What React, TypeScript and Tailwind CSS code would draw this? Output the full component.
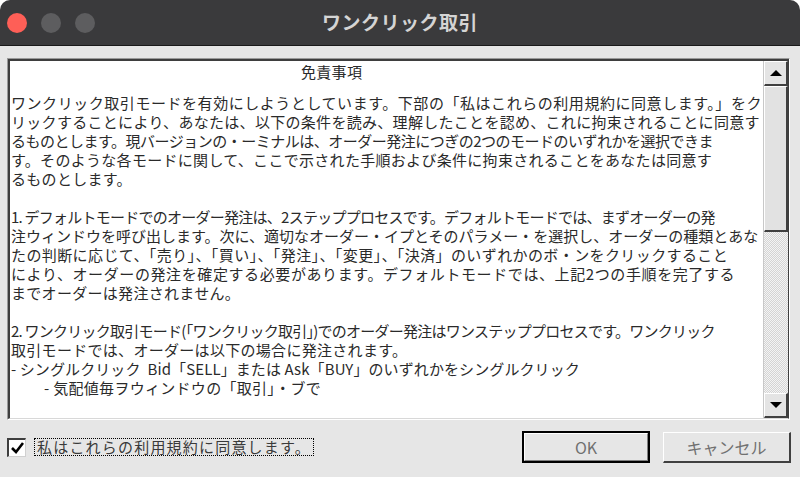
const jp = "font-['Noto_Sans_CJK_JP','Noto_Sans',sans-serif]";

type Line = { t: string; c: string };

// tracking per line so the wraps end where the reference ends them
const intro: Line[] = [
  { t: "ワンクリック取引モードを有効にしようとしています。下部の「私はこれらの利用規約に同意します。」をク", c: "tracking-[0.55px]" },
  { t: "リックすることにより、あなたは、以下の条件を読み、理解したことを認め、これに拘束されることに同意す", c: "tracking-[0.3px]" },
  { t: "るものとします。現バージョンの・ーミナルは、オーダー発注につぎの2つのモードのいずれかを選択できま", c: "tracking-[-0.5px]" },
  { t: "す。そのような各モードに関して、ここで示された手順および条件に拘束されることをあなたは同意す", c: "tracking-[0.3px]" },
  { t: "るものとします。", c: "tracking-[0.3px]" },
];

const item1: Line[] = [
  { t: "1. デフォルトモードでのオーダー発注は、2ステッププロセスです。デフォルトモードでは、まずオーダーの発", c: "tracking-[-0.75px]" },
  { t: "注ウィンドウを呼び出します。次に、適切なオーダー・イプとそのパラメー・を選択し、オーダーの種類とあな", c: "tracking-[0px]" },
  { t: "たの判断に応じて、「売り」、「買い」、「発注」、「変更」、「決済」のいずれかのボ・ンをクリックすること", c: "tracking-[0.4px]" },
  { t: "により、オーダーの発注を確定する必要があります。デフォルトモードでは、上記2つの手順を完了する", c: "tracking-[0.6px]" },
  { t: "までオーダーは発注されません。", c: "tracking-[0.3px]" },
];

const item2: Line[] = [
  { t: "2. ワンクリック取引モード(「ワンクリック取引」)でのオーダー発注はワンステッププロセスです。ワンクリック", c: "tracking-[-0.75px]" },
  { t: "取引モードでは、オーダーは以下の場合に発注されます。", c: "tracking-[0.3px]" },
  { t: "- シングルクリック  Bid「SELL」または Ask「BUY」のいずれかをシングルクリック", c: "tracking-[0.1px]" },
];

function Lines({ lines }: { lines: Line[] }) {
  return (
    <>
      {lines.map((l, i) => (
        <div key={i} className={`whitespace-pre ${l.c}`}>
          {l.t}
        </div>
      ))}
    </>
  );
}

function Scrollbar() {
  return (
    <div className="w-[25px] flex flex-col border-l border-[#c8c8c8]">
      {/* up */}
      <div className="h-[25px] flex items-center justify-center bg-[#e4e4e4] border-t border-l border-white border-b-2 border-r-2 border-b-[#404040] border-r-[#404040]">
        <div className="w-0 h-0 border-l-[6px] border-r-[6px] border-b-[6px] border-l-transparent border-r-transparent border-b-black" />
      </div>
      {/* thumb */}
      <div className="h-[146px] bg-[#e2e2e2] border-t border-l border-white border-b-2 border-r-2 border-b-[#404040] border-r-[#404040]" />
      {/* track */}
      <div className="flex-1 bg-[repeating-conic-gradient(#d4d4d4_0_25%,#f4f4f4_0_50%)] bg-[length:2px_2px]" />
      {/* down */}
      <div className="h-[25px] flex items-center justify-center bg-[#e4e4e4] border-t border-l border-white border-b-2 border-r-2 border-b-[#404040] border-r-[#404040]">
        <div className="w-0 h-0 border-l-[6px] border-r-[6px] border-t-[6px] border-l-transparent border-r-transparent border-t-black" />
      </div>
    </div>
  );
}

export default function App() {
  return (
    <div className="w-[800px] h-[477px] bg-white">
      <div className="w-full h-full rounded-t-[10px] overflow-hidden flex flex-col bg-[#e6e6e6]">
        {/* title bar */}
        <div className="h-[46px] shrink-0 bg-[#3a3a3c] border-b border-[#1a1a1a] grid grid-cols-[1fr_auto_1fr] items-center">
          <div className="flex items-center gap-[14px] pl-[7px]">
            <div className="w-[20px] h-[20px] rounded-full bg-[#fe5f57]" />
            <div className="w-[20px] h-[20px] rounded-full bg-[#5d5d5f]" />
            <div className="w-[20px] h-[20px] rounded-full bg-[#5d5d5f]" />
          </div>
          <div className={`${jp} text-[19px] font-bold text-[#d4d4d4] tracking-[0.5px]`}>
            ワンクリック取引
          </div>
          <div />
        </div>

        <div className="flex-1 flex flex-col px-[7px] pt-[12px]">
          {/* text box */}
          <div className="h-[362px] w-[783px] border-t border-l border-[#9a9a9a] border-b border-r border-b-white border-r-white">
            <div className="h-full flex bg-white border-t-2 border-l-2 border-[#3e3e3e] border-b border-r border-b-[#d8d8d8] border-r-[#3e3e3e]">
              <div className={`${jp} flex-1 overflow-hidden pl-[1px] pt-[1px] text-[15px] leading-[19px] text-[#2a2a2a]`}>
                <div className="pl-[290px] mb-[12px] tracking-[0.3px]">免責事項</div>
                <Lines lines={intro} />
                <div className="h-[19px]" />
                <Lines lines={item1} />
                <div className="h-[19px]" />
                <Lines lines={item2} />
                <div className="whitespace-pre pl-[33px] tracking-[0.3px]">- 気配値毎ヲウィンドウの「取引」・ブで</div>
              </div>
              <Scrollbar />
            </div>
          </div>

          {/* bottom row */}
          <div className="flex items-center mt-[11px] pr-[2px]">
            <div className="w-[19px] h-[19px] bg-white border-t-2 border-l-2 border-[#3e3e3e] border-b border-r border-b-[#d0d0d0] border-r-[#d0d0d0] flex items-center justify-center">
              <svg width="13" height="12" viewBox="0 0 13 12">
                <path d="M1 6 L5 10 L12 1" fill="none" stroke="#000" strokeWidth="2.6" />
              </svg>
            </div>
            <div className={`${jp} ml-[8px] px-[2px] h-[18px] flex items-center border border-dotted border-black text-[15px] tracking-[1.2px] text-[#3a3a3a]`}>
              私はこれらの利用規約に同意します。
            </div>
            <div className="flex-1" />
            <button className={`${jp} w-[128px] h-[32px] border-2 border-black bg-[#e6e6e6] text-[16px] text-[#707070]`}>
              <div className="w-full h-full flex items-center justify-center border-t border-l border-white border-b border-r border-b-[#808080] border-r-[#808080]">
                OK
              </div>
            </button>
            <button className={`${jp} ml-[13px] w-[128px] h-[31px] bg-[#e6e6e6] border-t border-l border-white border-b-2 border-r-2 border-b-[#404040] border-r-[#404040] text-[16px] text-[#707070] flex items-center justify-center`}>
              キャンセル
            </button>
          </div>
        </div>
      </div>
    </div>
  );
}
